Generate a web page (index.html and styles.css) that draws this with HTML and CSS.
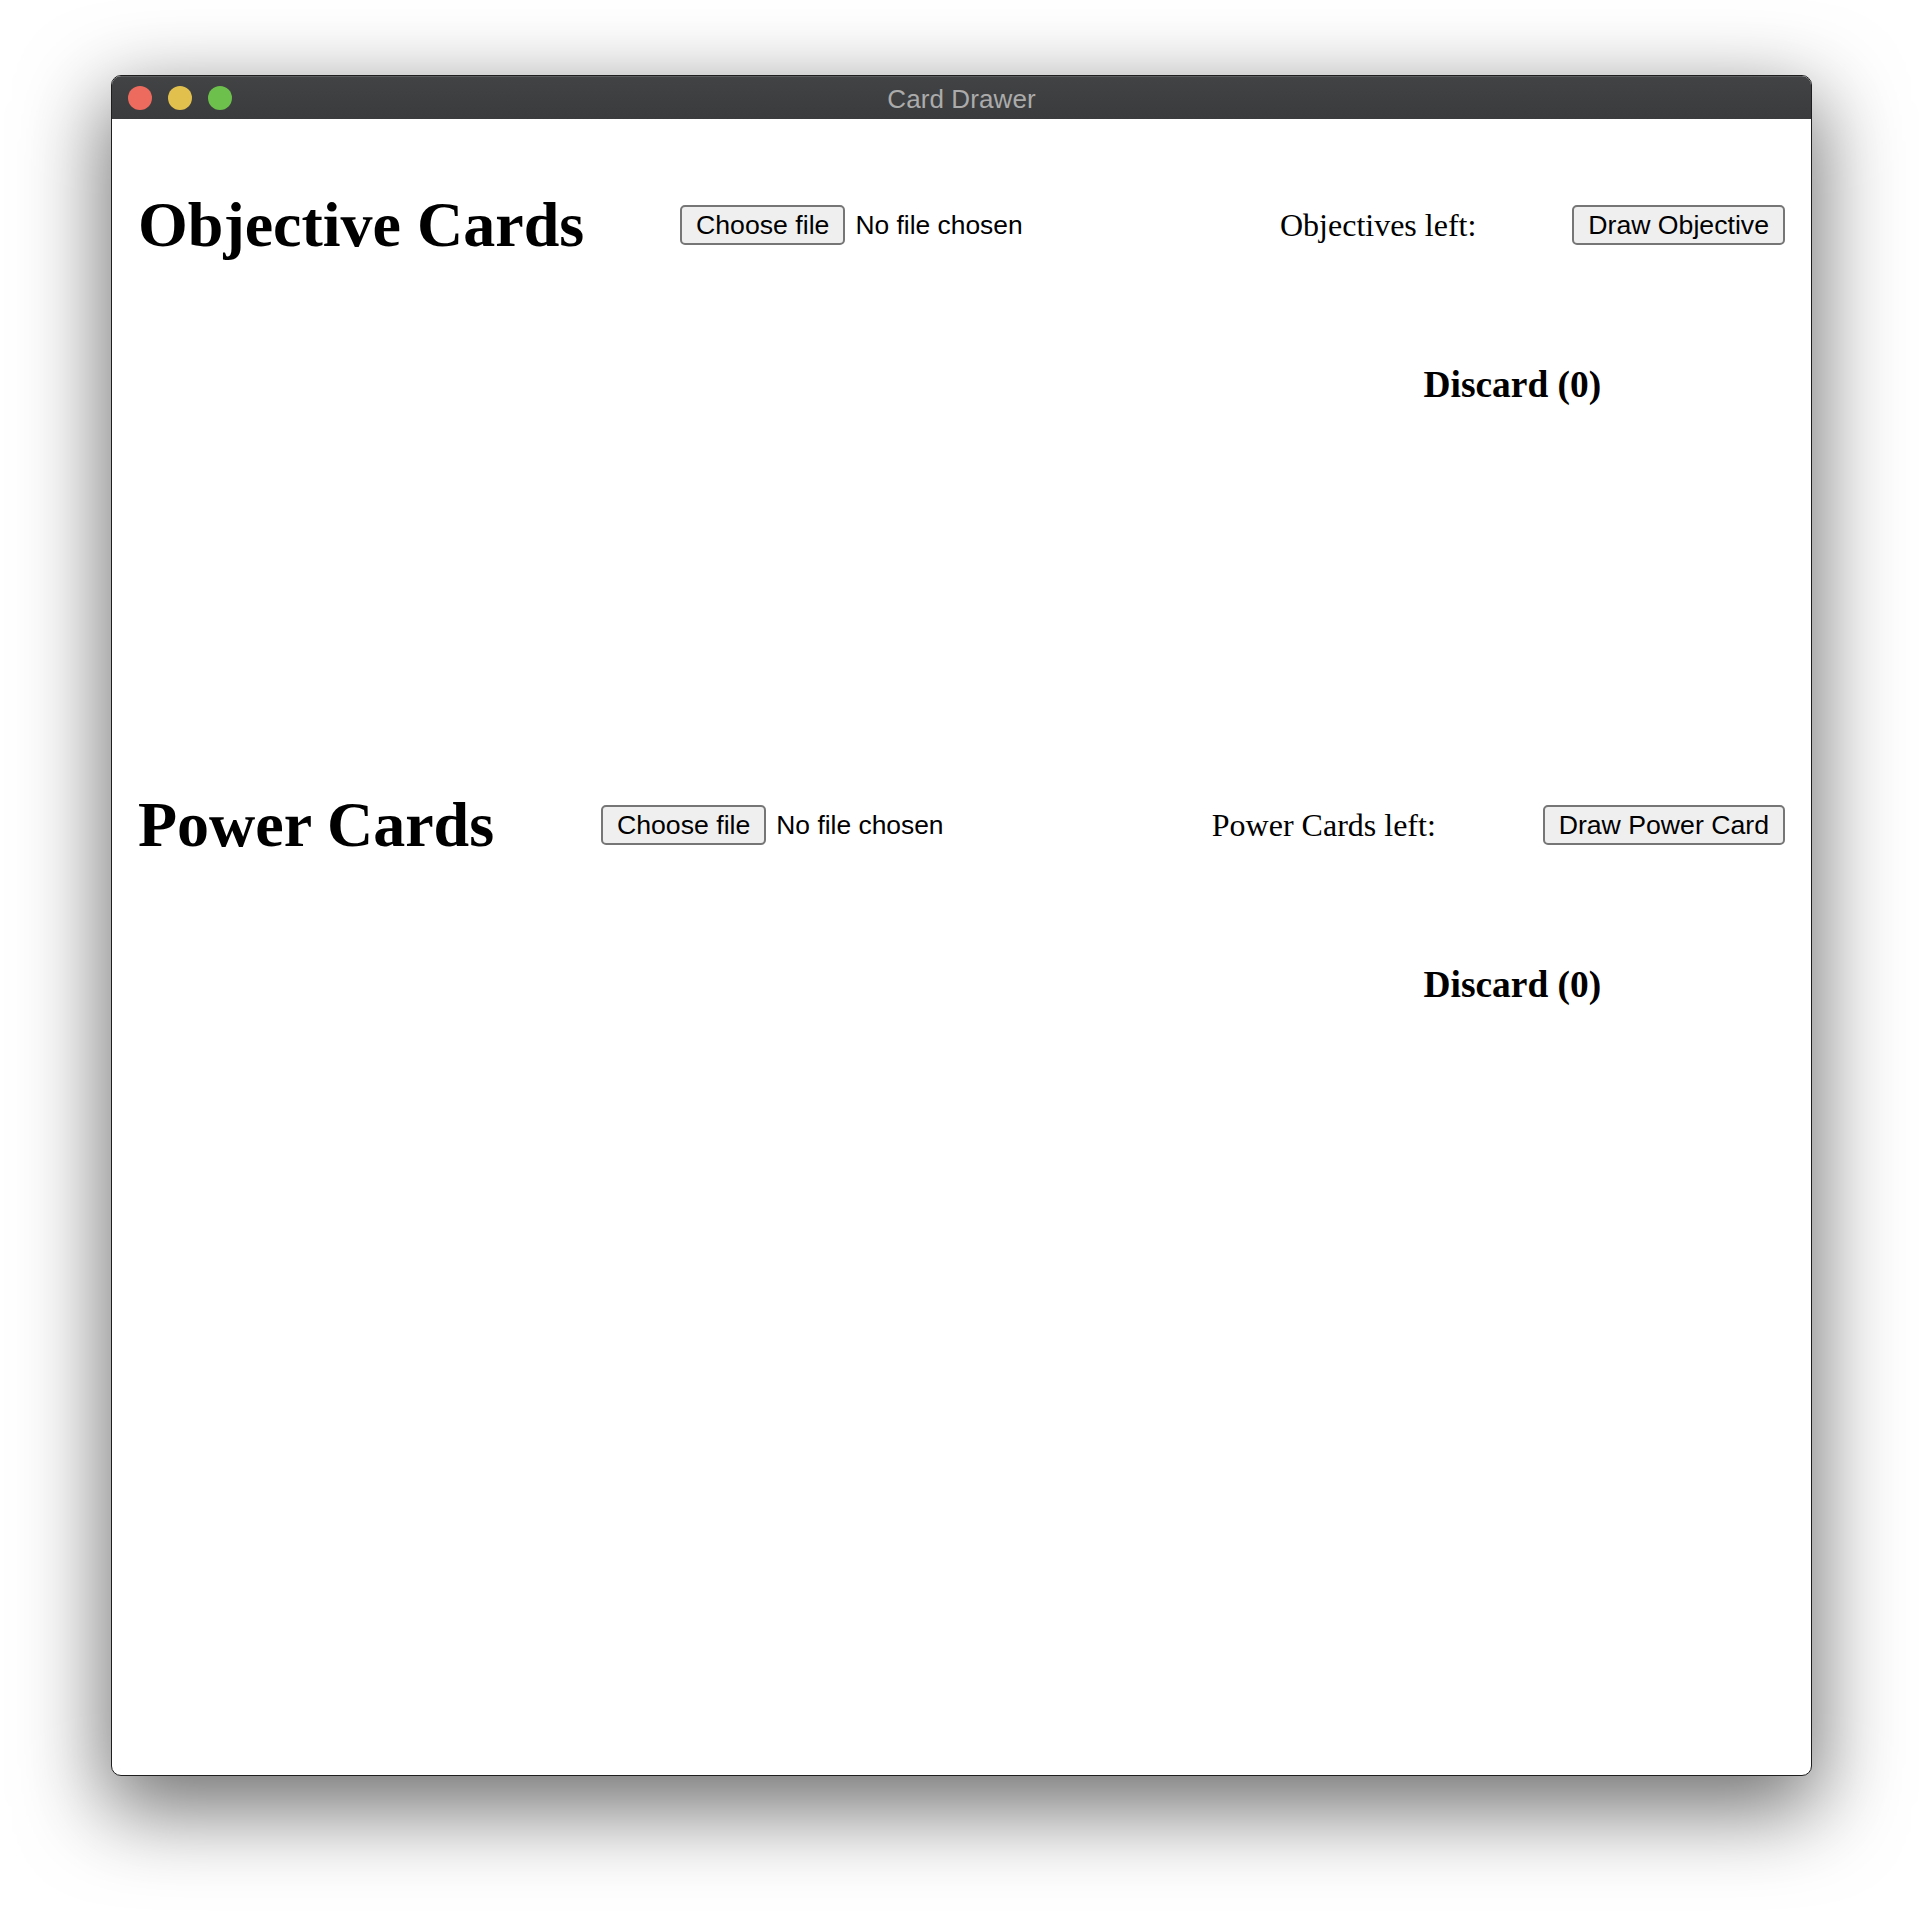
FILE: index.html
```html
<!DOCTYPE html>
<html lang="en">
<head>
<meta charset="utf-8">
<title>Card Drawer</title>
<link rel="stylesheet" href="styles.css">
</head>
<body>
<div class="window">
  <div class="titlebar">
    <div class="lights">
      <span class="light red"></span>
      <span class="light yellow"></span>
      <span class="light green"></span>
    </div>
    <div class="title">Card Drawer</div>
    <div class="spacer"></div>
  </div>
  <div class="content">
    <section class="deck">
      <div class="deck-head">
        <h1>Objective Cards</h1>
        <div class="file">
          <button class="btn">Choose file</button>
          <span class="file-status">No file chosen</span>
        </div>
        <div class="left">Objectives left: <span class="count"></span></div>
        <button class="btn">Draw Objective</button>
      </div>
      <div class="deck-body">
        <div class="drawn"></div>
        <div class="discard"><h3>Discard (0)</h3></div>
      </div>
    </section>
    <section class="deck">
      <div class="deck-head">
        <h1>Power Cards</h1>
        <div class="file">
          <button class="btn">Choose file</button>
          <span class="file-status">No file chosen</span>
        </div>
        <div class="left">Power Cards left: <span class="count"></span></div>
        <button class="btn">Draw Power Card</button>
      </div>
      <div class="deck-body">
        <div class="drawn"></div>
        <div class="discard"><h3>Discard (0)</h3></div>
      </div>
    </section>
  </div>
</div>
</body>
</html>
```

FILE: styles.css
```css
html, body {
  margin: 0;
  padding: 0;
  background: #ffffff;
}

body {
  font-family: "Liberation Serif", "Times New Roman", serif;
  min-height: 1924px;
  padding-top: 75px;
  box-sizing: border-box;
}

.window {
  margin-left: 111px;
  width: 1701px;
  height: 1701px;
  box-sizing: border-box;
  border: 1px solid #1e1e1e;
  border-radius: 10px;
  overflow: hidden;
  background: #ffffff;
  box-shadow: 0 28px 84px 6px rgba(0, 0, 0, 0.56);
  display: flex;
  flex-direction: column;
}

.titlebar {
  height: 43px;
  flex: none;
  display: grid;
  grid-template-columns: 1fr auto 1fr;
  align-items: center;
  background: linear-gradient(#424345, #3a3b3d);
  box-shadow: inset 0 1px 0 rgba(255, 255, 255, 0.14);
}

.lights {
  display: flex;
  gap: 16px;
  padding-left: 16px;
}

.light {
  width: 24px;
  height: 24px;
  border-radius: 50%;
  display: block;
}

.red { background: #ed6a5e; }
.yellow { background: #e2c04e; }
.green { background: #6cc04b; }

.title {
  font-family: "Liberation Sans", Arial, sans-serif;
  font-size: 26px;
  color: #ababab;
  letter-spacing: 0.1px;
  padding-top: 3px;
}

.content {
  flex: 1;
  padding: 26px 26px 0 26px;
}

.deck {
  height: 600px;
  display: flex;
  flex-direction: column;
}

.deck-head {
  display: flex;
  justify-content: space-between;
  align-items: center;
}

.deck-head h1 {
  font-size: 64px;
  font-weight: bold;
  margin: 43px 0;
  line-height: normal;
}

.file {
  width: 504px;
  display: flex;
  align-items: center;
  gap: 10px;
}

.btn {
  font-family: "Liberation Sans", Arial, sans-serif;
  font-size: 26.67px;
  color: #000;
  background: #efefef;
  border: 2px solid #767676;
  border-radius: 5px;
  height: 40px;
  padding: 0 14px;
  line-height: 1;
}

.file-status {
  font-family: "Liberation Sans", Arial, sans-serif;
  font-size: 26.4px;
  color: #000;
}

.left {
  font-size: 32px;
  color: #000;
}

.deck-body {
  display: flex;
  flex: 1;
}

.drawn {
  flex: 2;
}

.discard {
  flex: 1;
  text-align: center;
  padding-top: 21px;
  padding-left: 11px;
}

.discard h3 {
  font-size: 37.44px;
  font-weight: bold;
  margin: 37px 0 0;
  line-height: normal;
}
```
